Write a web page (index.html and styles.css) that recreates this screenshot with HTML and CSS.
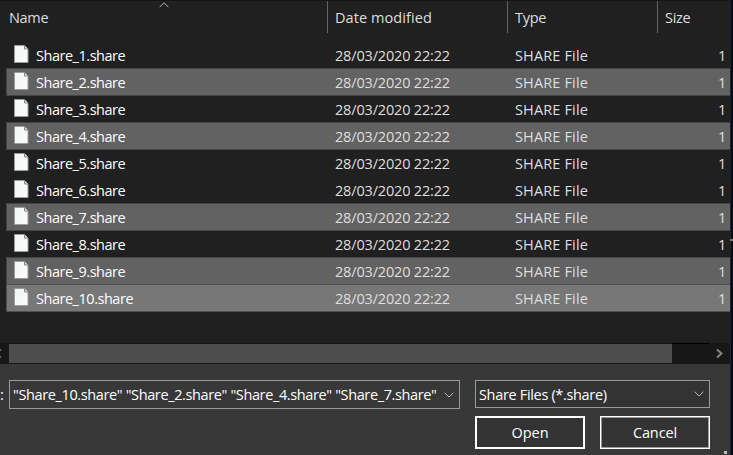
FILE: index.html
```
<!DOCTYPE html>
<html lang="en">
<head>
<meta charset="utf-8">
<title>Open</title>
<link rel="stylesheet" href="styles.css">
</head>
<body>
<svg class="defs" aria-hidden="true">
  <defs>
    <linearGradient id="paper" x1="0" y1="0" x2="1" y2="1"><stop offset="0" stop-color="#f2f5f6"/><stop offset="1" stop-color="#fbfbfb"/></linearGradient>
    <symbol id="file" viewBox="0 0 15 18">
      <path d="M.5.5h9.700l3.800 3.800v13.200H.5z" fill="url(#paper)" stroke="#9b9b9b"/>
      <path d="M10.500.5v3.500H14" fill="#ddd" stroke="#858585"/>
    </symbol>
  </defs>
</svg>
<main class="dialog">
  <header class="head">
    <div class="c-name"><span>Name</span><svg class="sort" viewBox="0 0 10 6"><path d="M.7 5 5 .8 9.300 5"/></svg></div>
    <div class="c-date"><span>Date modified</span></div>
    <div class="c-type"><span>Type</span></div>
    <div class="c-size"><span>Size</span></div>
  </header>
  <section class="files">
    <div class="row"><div class="file"><svg><use href="#file"/></svg><span>Share_1.share</span></div><div class="date">28/03/2020 22:22</div><div class="type">SHARE File</div><div class="size">1</div></div>
    <div class="row sel"><div class="file"><svg><use href="#file"/></svg><span>Share_2.share</span></div><div class="date">28/03/2020 22:22</div><div class="type">SHARE File</div><div class="size">1</div></div>
    <div class="row"><div class="file"><svg><use href="#file"/></svg><span>Share_3.share</span></div><div class="date">28/03/2020 22:22</div><div class="type">SHARE File</div><div class="size">1</div></div>
    <div class="row sel"><div class="file"><svg><use href="#file"/></svg><span>Share_4.share</span></div><div class="date">28/03/2020 22:22</div><div class="type">SHARE File</div><div class="size">1</div></div>
    <div class="row"><div class="file"><svg><use href="#file"/></svg><span>Share_5.share</span></div><div class="date">28/03/2020 22:22</div><div class="type">SHARE File</div><div class="size">1</div></div>
    <div class="row"><div class="file"><svg><use href="#file"/></svg><span>Share_6.share</span></div><div class="date">28/03/2020 22:22</div><div class="type">SHARE File</div><div class="size">1</div></div>
    <div class="row sel"><div class="file"><svg><use href="#file"/></svg><span>Share_7.share</span></div><div class="date">28/03/2020 22:22</div><div class="type">SHARE File</div><div class="size">1</div></div>
    <div class="row"><div class="file"><svg><use href="#file"/></svg><span>Share_8.share</span></div><div class="date">28/03/2020 22:22</div><div class="type">SHARE File</div><div class="size">1</div></div>
    <div class="row sel"><div class="file"><svg><use href="#file"/></svg><span>Share_9.share</span></div><div class="date">28/03/2020 22:22</div><div class="type">SHARE File</div><div class="size">1</div></div>
    <div class="row sel focus"><div class="file"><svg><use href="#file"/></svg><span>Share_10.share</span></div><div class="date">28/03/2020 22:22</div><div class="type">SHARE File</div><div class="size">1</div></div>
  </section>
  <div class="scroll">
    <svg class="left" viewBox="0 0 9 21"><path d="M-3 10.500 1 6.500M-3 10.500 1 14.500"/></svg>
    <div class="thumb"></div>
    <div class="rest"></div>
    <svg class="right" viewBox="0 0 21 21"><path d="m8 6.500 4.500 4-4.500 4"/></svg>
  </div>
  <footer class="foot">
    <span class="colon">:</span>
    <div class="box names"><span>"Share_10.share" "Share_2.share" "Share_4.share" "Share_7.share"</span><svg class="chev" viewBox="0 0 10 6"><path d="M.7.8 5 5 9.300.8"/></svg></div>
    <div class="side">
      <div class="box filter"><span>Share Files (*.share)</span><svg class="chev" viewBox="0 0 10 6"><path d="M.7.8 5 5 9.300.8"/></svg></div>
      <div class="buttons"><button class="open">Open</button><button class="cancel">Cancel</button></div>
    </div>
    <i class="grip"></i>
  </footer>
</main>
<i class="speck"></i>
</body>
</html>
```
FILE: styles.css
```
* { box-sizing: border-box; }
body { margin: 0; width: 733px; height: 455px; overflow: hidden; background: #040b15; color: #dedede; font: 14.5px/20px "Open Sans", "Noto Sans", sans-serif; letter-spacing: -0.3px; white-space: nowrap; }
svg { display: block; flex: none; fill: none; }
.defs { position: absolute; width: 0; height: 0; }
.dialog { position: relative; width: 731px; height: 455px; background: #202020; border-right: 1px solid #202329; display: flex; flex-direction: column; }
.head { height: 41px; border-top: 1px solid #151515; display: grid; grid-template-columns: 327px 180px 150px 1fr; }
.head > div { height: 32px; padding: 7px 0 0 7px; border-left: 1px solid #636363; }
.head .c-name { border: 0; padding-left: 9px; position: relative; }
.head .c-date { letter-spacing: 0.08px; }
.sort { position: absolute; left: 159px; top: 1px; width: 10px; height: 6px; stroke: #b5b5b5; }
.files { height: 302px; padding-left: 6px; overflow: hidden; }
.row { height: 28px; margin-bottom: -1px; border: 1px solid transparent; border-right: 0; display: grid; grid-template-columns: 328px 180px 1fr 4px; align-items: center; }
.row .date, .row .type, .row .size { padding-top: 2px; }
.row .date { letter-spacing: -0.17px; }
.row .size { grid-column: 3; grid-row: 1; text-align: right; }
.row .type { grid-column: 3; grid-row: 1; letter-spacing: 0.15px; }
.sel { background: #626262; border-color: #444; }
.focus { background: #777; border-color: #505050; }
.file { display: flex; align-items: center; padding-left: 7px; color: #fff; letter-spacing: -0.47px; }
.file span { padding-top: 2px; }
.file svg { width: 15px; height: 18px; margin-right: 7px; position: relative; top: -1px; }
.scroll { height: 21px; background: #171717; display: flex; align-items: center; }
.left { width: 9px; height: 21px; stroke: #777; stroke-width: 1.5px; }
.thumb { width: 663px; height: 19px; background: #4d4d4d; }
.rest { width: 37px; height: 21px; border-top: 1px solid #000; }
.right { width: 21px; height: 21px; stroke: #858585; stroke-width: 2px; }
.foot { position: relative; height: 91px; background: #383838; padding-top: 16px; display: flex; color: #fff; }
.colon { width: 9px; padding-top: 5px; }
.box { border: 1px solid #999; display: flex; align-items: center; justify-content: space-between; padding: 0 5px 0 3px; }
.names { width: 451px; height: 29px; letter-spacing: -0.37px; }
.side { margin-left: 15px; width: 235px; }
.filter { height: 28px; background: #333; letter-spacing: -0.33px; }
.filter span { padding-top: 1px; }
.chev { width: 10px; height: 6px; stroke: #b8b8b8; }
.buttons { display: flex; justify-content: space-between; margin-top: 8px; }
button { width: 110px; height: 33px; padding: 0; background: #333; color: #fff; font: inherit; letter-spacing: 0; }
.open { border: 2px solid #fff; }
.cancel { border: 1px solid #fff; box-shadow: inset 0 0 0 1px #999; letter-spacing: -0.1px; }
.grip { position: absolute; left: 724px; bottom: 1px; width: 3px; height: 3px; background: #bbb; }
.speck { position: absolute; left: 730px; top: 239px; width: 3px; height: 2px; background: #8d7c60; }
```
